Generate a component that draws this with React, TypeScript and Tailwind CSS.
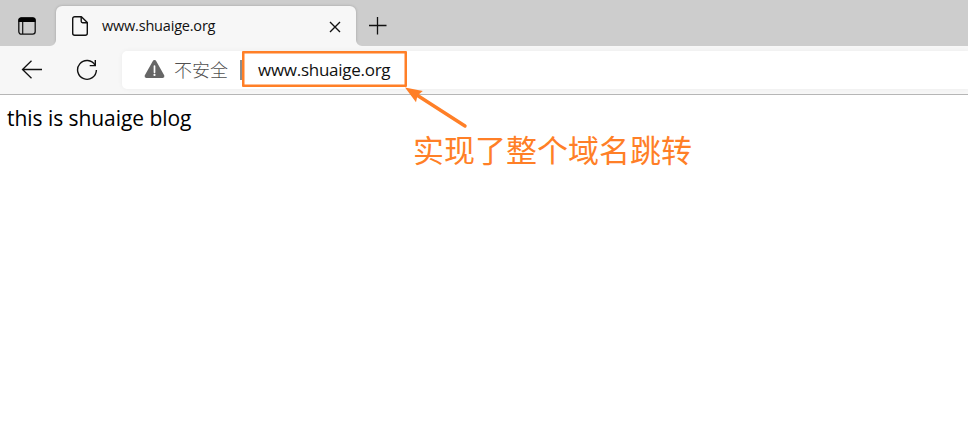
const latin = "font-['Open_Sans','Noto_Sans',sans-serif]";
const chinese = "font-['Noto_Sans_CJK_SC',sans-serif]";

function TabActionsIcon() {
  return (
    <svg className="ml-[18px] mt-[17px] shrink-0" width="18" height="18" viewBox="0 0 18 18" fill="none">
      <rect x="0.8" y="0.8" width="16.4" height="16.4" rx="2.6" stroke="#111" strokeWidth="1.3" />
      <path d="M.5 5V3.2A2.8 2.8 0 0 1 3.3.5h11.4a2.8 2.8 0 0 1 2.8 2.7V5z" fill="#000" />
      <path d="M4.7 5v12" stroke="#111" strokeWidth="1.2" />
    </svg>
  );
}

function PageIcon() {
  return (
    <svg className="shrink-0" width="16" height="20" viewBox="0 0 16 20" fill="none" stroke="#111" strokeWidth="1.4" strokeLinejoin="round">
      <path d="M9.4.7H2.7a2 2 0 0 0-2 2v14.6a2 2 0 0 0 2 2h10.6a2 2 0 0 0 2-2V6.6z" />
      <path d="M9.2.9v4.4a1.4 1.4 0 0 0 1.4 1.4h4.5" />
    </svg>
  );
}

function Tab() {
  return (
    <div className="relative mt-[6px] flex h-[41px] w-[300px] shrink-0 items-start rounded-t-[6px] bg-[#f7f7f7] pl-[16px] shadow-[0_0_3px_rgba(0,0,0,0.22)]">
      <div className="mt-[10px] flex h-5 w-full items-center">
        <PageIcon />
        <span className={`${latin} ml-[14px] w-[227px] whitespace-nowrap text-[14.5px] leading-5 tracking-[-0.2px] text-[#111]`}>www.shuaige.org</span>
        <svg className="mt-[1px] shrink-0" width="12" height="12" viewBox="0 0 12 12" stroke="#111" strokeWidth="1.4">
          <path d="M1 1l10 10M11 1L1 11" />
        </svg>
      </div>
    </div>
  );
}

function Toolbar() {
  return (
    <div className="relative flex h-[49px] items-start border-b border-[#b6b6b6] bg-[#f7f7f7]">
      <svg className="ml-[21px] mt-[14px] shrink-0" width="22" height="20" viewBox="0 0 22 20" fill="none" stroke="#111" strokeWidth="1.3">
        <path d="M21 9.5H1.5M10.5.8L1.5 9.5l9 8.8" />
      </svg>
      <svg className="ml-[33px] mt-[13px] shrink-0" width="22" height="22" viewBox="0 0 22 22" fill="none" stroke="#111" strokeWidth="1.4">
        <path d="M19.1 6.1A9.4 9.4 0 1 0 20.4 11" />
        <path d="M19.3 1v5.6h-5.6" />
      </svg>
      <div className="ml-[24px] mt-[5px] flex h-[38px] grow items-start rounded-l-[5px] bg-white shadow-[0_0_5px_rgba(0,0,0,0.05)]">
        <svg className="ml-[22px] mt-[9px] shrink-0" width="21" height="19" viewBox="0 0 21 19">
          <path d="M8.7 1.2a2 2 0 0 1 3.6 0l8 14.4A1.9 1.9 0 0 1 18.7 18H2.3A1.9 1.9 0 0 1 .7 15.6z" fill="#666" />
          <path d="M10.5 6v6.3" stroke="white" strokeWidth="1.7" strokeLinecap="round" />
          <circle cx="10.5" cy="14.9" r="1.1" fill="white" />
        </svg>
        <span className={`${chinese} ml-[9px] mt-[5px] w-[54px] whitespace-nowrap text-[18px] font-light leading-[26px] text-[#505050]`}>不安全</span>
        <span className="ml-[12px] mt-[9px] h-5 w-[2px] bg-[#8c8c8c]" />
        <div className={`${latin} flex h-[36px] w-[165px] items-center rounded-[1px] border-2 border-[#ff7f27] pl-[14px] pt-[2px] text-[17px] tracking-[-0.27px] text-[#111] shadow-[inset_0_0_0_0.5px_#ff7f27]`}>www.shuaige.org</div>
      </div>
    </div>
  );
}

export default function App() {
  return (
    <div className="relative h-[430px] w-[968px] overflow-hidden bg-white">
      <header className="flex h-[46px] items-start bg-[#cdcdcd]">
        <div className="flex h-[46px] w-[56px] shrink-0 rounded-br-[6px]"><TabActionsIcon /></div>
        <Tab />
        <svg className="ml-[13px] mt-[17px] shrink-0" width="18" height="18" viewBox="0 0 18 18" stroke="#111" strokeWidth="1.3">
          <path d="M8.5 0v17.5M0 8.5h17.5" />
        </svg>
      </header>
      <Toolbar />
      <main className={`${latin} pl-[7px] pt-[8px] text-[21px] leading-[30px] tracking-[-0.05px] text-black`}>this is shuaige blog</main>

      <svg className="absolute left-[50px] top-[40px]" width="312" height="6" viewBox="0 0 312 6" fill="#f7f7f7">
        <path d="M0 6a6 6 0 0 0 6-6v6zM312 6a6 6 0 0 1-6-6v6z" />
      </svg>
      <svg className="absolute left-[400px] top-[82px]" width="72" height="50" viewBox="0 0 72 50">
        <path d="M65 44L16 12.5" stroke="#ff7f27" strokeWidth="3.4" strokeLinecap="round" />
        <path d="M5 5.5l17.8 3.4-5.3 4.6-1.5 6.7z" fill="#ff7f27" />
      </svg>
      <div className={`${chinese} absolute left-[413px] top-[126px] whitespace-nowrap text-[31px] leading-[45px] text-[#ff7f27]`}>实现了整个域名跳转</div>
    </div>
  );
}
